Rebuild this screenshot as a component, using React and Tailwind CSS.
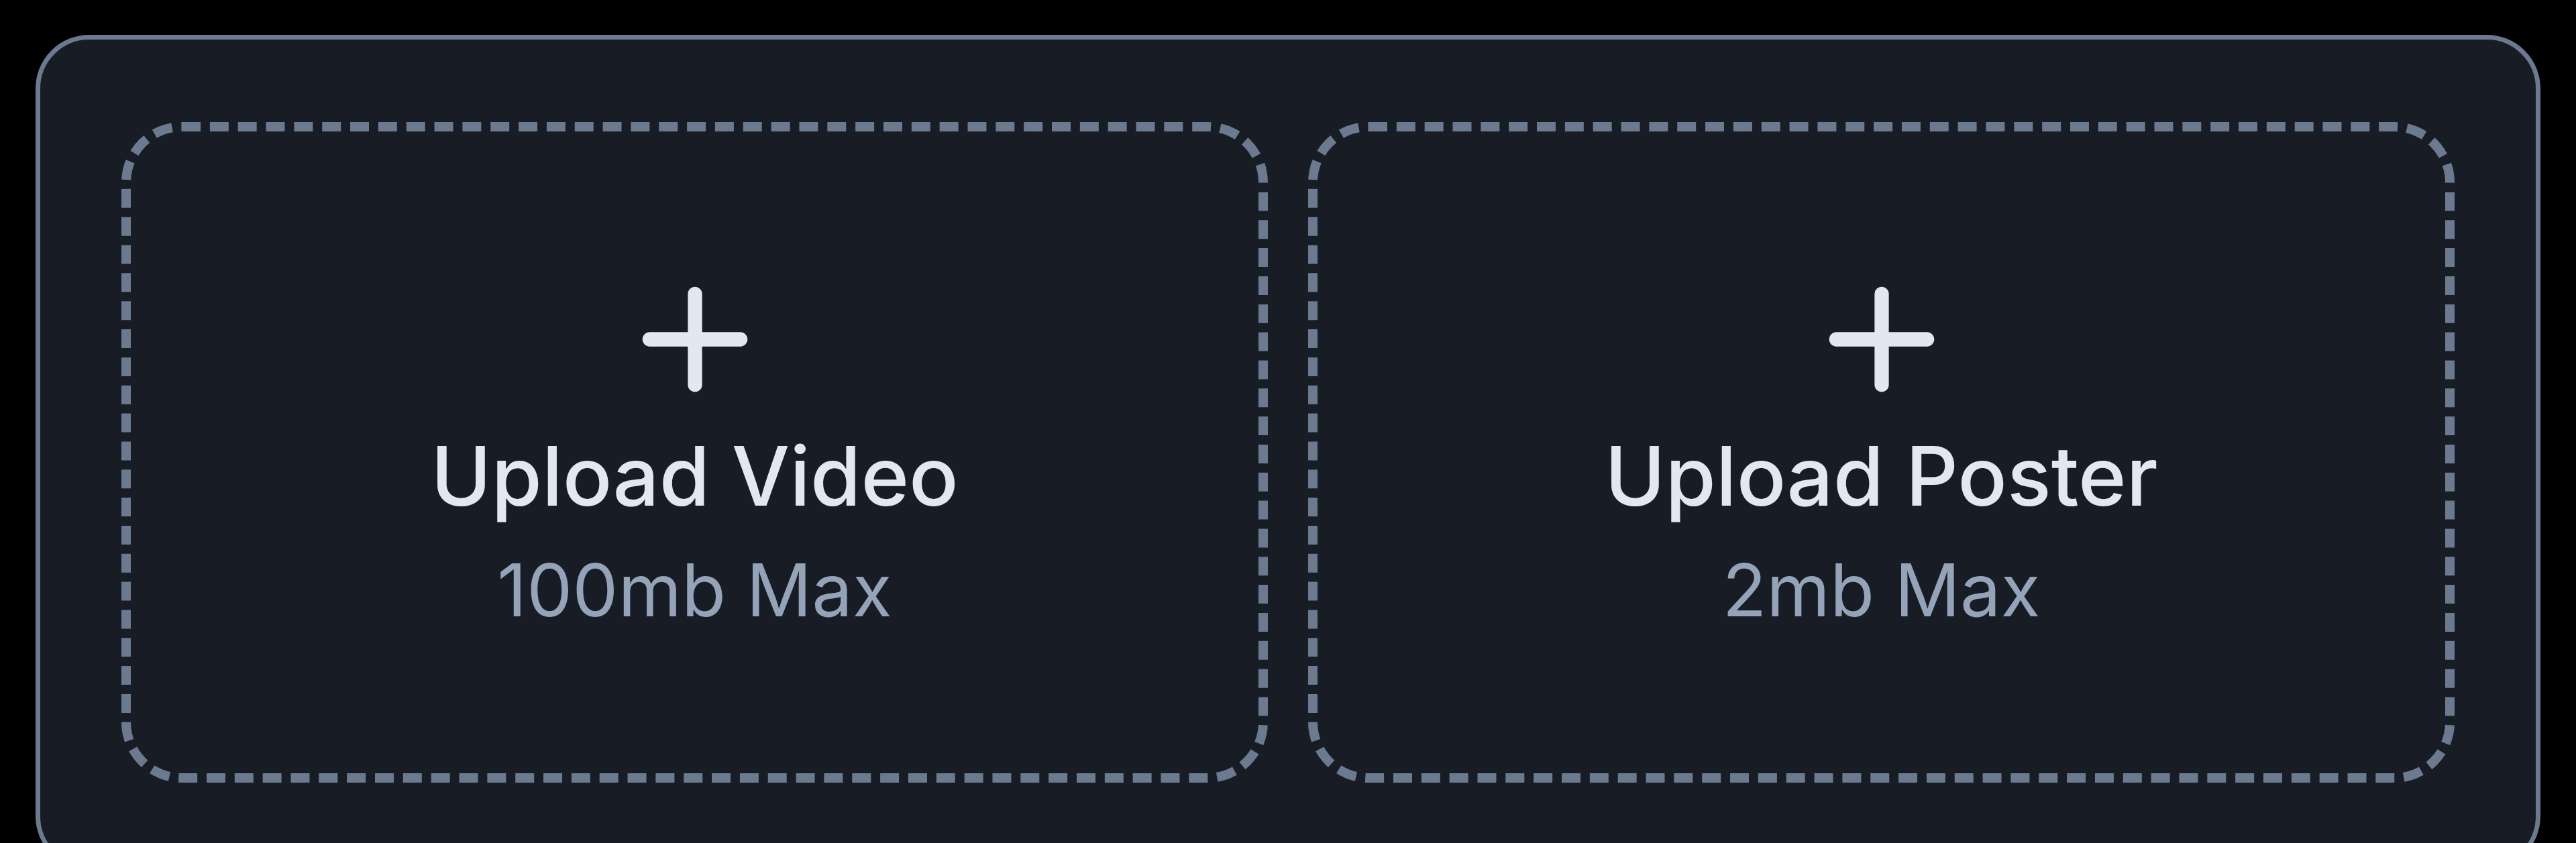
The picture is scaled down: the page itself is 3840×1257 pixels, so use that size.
import { Plus } from 'lucide-react';

const uploads = [
  { title: 'Upload Video', limit: '100mb Max' },
  { title: 'Upload Poster', limit: '2mb Max' },
];

function UploadBox({ title, limit }) {
  return (
    <button
      type="button"
      className="flex h-[985px] flex-col items-center justify-center rounded-[90px] border-[14px] border-dashed border-[#6b7a8f] pb-[23px]"
    >
      <Plus className="-my-[2px] h-[232px] w-[232px] text-[#e2e8f0]" strokeWidth={2.2} />
      <span className="mt-[26px] text-[122px] font-medium leading-[128px] text-[#e2e8f0]">
        {title}
      </span>
      <span className="mt-[51px] text-[108px] leading-[110px] text-[#94a3b8]">
        {limit}
      </span>
    </button>
  );
}

export default function App() {
  return (
    <div
      className="min-h-screen bg-black px-[53px] pt-[52px] pb-[53px]"
      style={{ fontFamily: 'Inter, "Noto Sans", sans-serif' }}
    >
      <div className="rounded-[80px] border-[7px] border-[#6b7a8f] bg-[#181c25] px-[121px] py-[123px]">
        <div className="grid grid-cols-2 gap-[60px]">
          {uploads.map((u) => (
            <UploadBox key={u.title} title={u.title} limit={u.limit} />
          ))}
        </div>
      </div>
    </div>
  );
}
